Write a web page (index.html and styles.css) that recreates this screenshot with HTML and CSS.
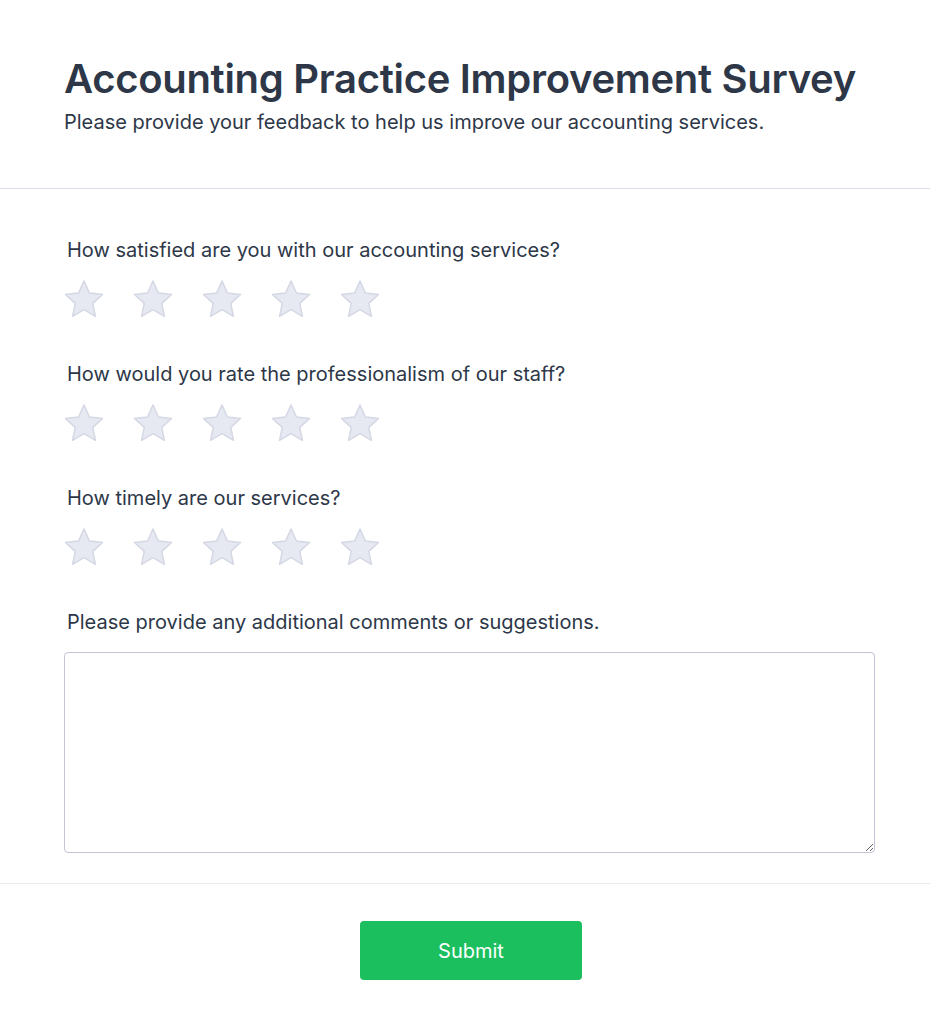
FILE: index.html
```html
<!DOCTYPE html>
<html lang="en">
<head>
<meta charset="utf-8">
<title>Accounting Practice Improvement Survey</title>
<link rel="stylesheet" href="styles.css">
</head>
<body>
<div class="survey">
  <header class="survey-header">
    <h1 class="title">Accounting Practice Improvement Survey</h1>
    <p class="subtitle">Please provide your feedback to help us improve our accounting services.</p>
  </header>
  <main class="survey-body">
    <div class="question">
      <label class="question-label">How satisfied are you with our accounting services?</label>
      <div class="stars">
        <svg class="star" viewBox="0 0 40 40"><polygon points="20,1 25.41,13.06 38.55,14.47 28.75,23.34 31.46,36.28 20,29.7 8.54,36.28 11.25,23.34 1.45,14.47 14.59,13.06"/></svg>
        <svg class="star" viewBox="0 0 40 40"><polygon points="20,1 25.41,13.06 38.55,14.47 28.75,23.34 31.46,36.28 20,29.7 8.54,36.28 11.25,23.34 1.45,14.47 14.59,13.06"/></svg>
        <svg class="star" viewBox="0 0 40 40"><polygon points="20,1 25.41,13.06 38.55,14.47 28.75,23.34 31.46,36.28 20,29.7 8.54,36.28 11.25,23.34 1.45,14.47 14.59,13.06"/></svg>
        <svg class="star" viewBox="0 0 40 40"><polygon points="20,1 25.41,13.06 38.55,14.47 28.75,23.34 31.46,36.28 20,29.7 8.54,36.28 11.25,23.34 1.45,14.47 14.59,13.06"/></svg>
        <svg class="star" viewBox="0 0 40 40"><polygon points="20,1 25.41,13.06 38.55,14.47 28.75,23.34 31.46,36.28 20,29.7 8.54,36.28 11.25,23.34 1.45,14.47 14.59,13.06"/></svg>
      </div>
    </div>
    <div class="question">
      <label class="question-label">How would you rate the professionalism of our staff?</label>
      <div class="stars">
        <svg class="star" viewBox="0 0 40 40"><polygon points="20,1 25.41,13.06 38.55,14.47 28.75,23.34 31.46,36.28 20,29.7 8.54,36.28 11.25,23.34 1.45,14.47 14.59,13.06"/></svg>
        <svg class="star" viewBox="0 0 40 40"><polygon points="20,1 25.41,13.06 38.55,14.47 28.75,23.34 31.46,36.28 20,29.7 8.54,36.28 11.25,23.34 1.45,14.47 14.59,13.06"/></svg>
        <svg class="star" viewBox="0 0 40 40"><polygon points="20,1 25.41,13.06 38.55,14.47 28.75,23.34 31.46,36.28 20,29.7 8.54,36.28 11.25,23.34 1.45,14.47 14.59,13.06"/></svg>
        <svg class="star" viewBox="0 0 40 40"><polygon points="20,1 25.41,13.06 38.55,14.47 28.75,23.34 31.46,36.28 20,29.7 8.54,36.28 11.25,23.34 1.45,14.47 14.59,13.06"/></svg>
        <svg class="star" viewBox="0 0 40 40"><polygon points="20,1 25.41,13.06 38.55,14.47 28.75,23.34 31.46,36.28 20,29.7 8.54,36.28 11.25,23.34 1.45,14.47 14.59,13.06"/></svg>
      </div>
    </div>
    <div class="question">
      <label class="question-label">How timely are our services?</label>
      <div class="stars">
        <svg class="star" viewBox="0 0 40 40"><polygon points="20,1 25.41,13.06 38.55,14.47 28.75,23.34 31.46,36.28 20,29.7 8.54,36.28 11.25,23.34 1.45,14.47 14.59,13.06"/></svg>
        <svg class="star" viewBox="0 0 40 40"><polygon points="20,1 25.41,13.06 38.55,14.47 28.75,23.34 31.46,36.28 20,29.7 8.54,36.28 11.25,23.34 1.45,14.47 14.59,13.06"/></svg>
        <svg class="star" viewBox="0 0 40 40"><polygon points="20,1 25.41,13.06 38.55,14.47 28.75,23.34 31.46,36.28 20,29.7 8.54,36.28 11.25,23.34 1.45,14.47 14.59,13.06"/></svg>
        <svg class="star" viewBox="0 0 40 40"><polygon points="20,1 25.41,13.06 38.55,14.47 28.75,23.34 31.46,36.28 20,29.7 8.54,36.28 11.25,23.34 1.45,14.47 14.59,13.06"/></svg>
        <svg class="star" viewBox="0 0 40 40"><polygon points="20,1 25.41,13.06 38.55,14.47 28.75,23.34 31.46,36.28 20,29.7 8.54,36.28 11.25,23.34 1.45,14.47 14.59,13.06"/></svg>
      </div>
    </div>
    <div class="question">
      <label class="question-label">Please provide any additional comments or suggestions.</label>
      <textarea class="comments"></textarea>
    </div>
  </main>
  <footer class="survey-footer">
    <button class="submit" type="button">Submit</button>
  </footer>
</div>
</body>
</html>
```
FILE: styles.css
```css
* { box-sizing: border-box; }
html, body { margin: 0; padding: 0; background: #ffffff; }
body {
  font-family: Inter, "Noto Sans", "Liberation Sans", sans-serif;
  color: #2d3748;
}
.survey { width: 930px; }
.survey-header {
  padding: 55px 40px 51px 64px;
  border-bottom: 1px solid #dcdde8;
}
.title {
  margin: 0;
  font-size: 40px;
  line-height: 48px;
  font-weight: 600;
  letter-spacing: -0.3px;
  white-space: nowrap;
  color: #2d3748;
}
.subtitle {
  margin: 4px 0 0;
  font-size: 20px;
  line-height: 30px;
  color: #2d3748;
}
.survey-body {
  padding: 46px 55px 30px 64px;
  display: flex;
  flex-direction: column;
  gap: 39px;
  border-bottom: 1px solid #e8e9ef;
}
.question {
  display: flex;
  flex-direction: column;
  gap: 15px;
}
.question-label {
  padding-left: 3px;
  font-size: 20px;
  line-height: 30px;
  color: #2d3748;
}
.stars {
  display: flex;
  gap: 29px;
}
.star {
  width: 40px;
  height: 40px;
  display: block;
}
.star polygon {
  fill: #e6e8f2;
  stroke: #d5d8e4;
  stroke-width: 1.5;
  stroke-linejoin: round;
}
.comments {
  display: block;
  width: 811px;
  height: 201px;
  border: 1px solid #c3c5d6;
  border-radius: 4px;
  resize: vertical;
  font-family: inherit;
  font-size: 16px;
  padding: 8px;
}
.survey-footer {
  padding: 37px 0 50px 12px;
  display: flex;
  justify-content: center;
}
.submit {
  width: 222px;
  height: 59px;
  border: none;
  border-radius: 4px;
  background: #1bbf5e;
  color: #ffffff;
  font-family: inherit;
  font-size: 20px;
  font-weight: 400;
}
```
